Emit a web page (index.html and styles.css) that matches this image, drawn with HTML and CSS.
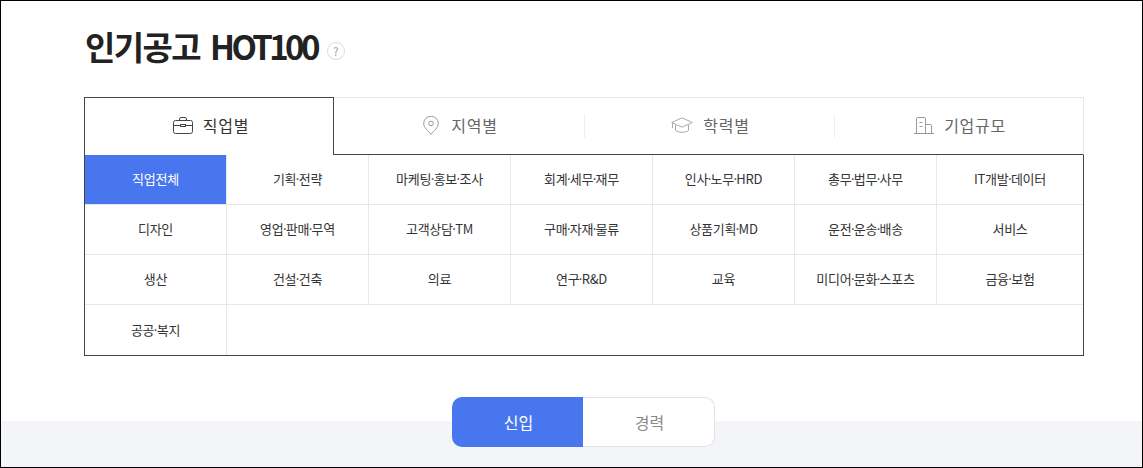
FILE: index.html
```html
<!DOCTYPE html>
<html lang="ko">
<head>
<meta charset="utf-8">
<title>인기공고 HOT100</title>
<link rel="stylesheet" href="styles.css">
</head>
<body>
<div class="frame">
  <main class="content">
    <h1 class="title">인기공고 <span class="latin">HOT100</span><span class="help">?</span></h1>
    <section class="panel">
      <div class="tabs">
        <div class="tab active">
          <svg class="ico" width="20" height="17" viewBox="0 0 20 17" fill="none" stroke="#444" stroke-width="1"><rect x="0.5" y="3.5" width="19" height="13" rx="2"/><path d="M6.5 3.5V2a1.500 1.500 0 0 1 1.500-1.500h4A1.500 1.500 0 0 1 13.500 2v1.500M0.500 8.500h6.500M13 8.500h6.500"/><rect x="7.500" y="7.500" width="5" height="2"/></svg>
          <span>직업별</span>
        </div>
        <div class="tab">
          <svg class="ico ico-pin" width="16" height="19" viewBox="0 0 16 19" fill="none" stroke="#999" stroke-width="1"><path d="M8 18.300C5 14.800 0.700 11.500 0.700 7.500a7.300 7.300 0 0 1 14.600 0C15.300 11.500 11 14.800 8 18.300z"/><circle cx="8" cy="7.500" r="2.300"/></svg>
          <span>지역별</span>
        </div>
        <div class="tab sep">
          <svg class="ico" width="22" height="17" viewBox="0 0 22 17" fill="none" stroke="#aaa" stroke-width="1"><path d="M11 0.800L21.300 5.500 11 10.200 0.700 5.500z"/><path d="M4.500 8v5.500c2 2.300 11 2.300 13 0V8M1.500 6v5"/></svg>
          <span>학력별</span>
        </div>
        <div class="tab sep">
          <svg class="ico" width="20" height="17" viewBox="0 0 20 17" fill="none" stroke="#999" stroke-width="1"><path d="M0 16.500h20M2.500 16.500V1.500a1 1 0 0 1 1-1h7a1 1 0 0 1 1 1v15M11.500 7.500h5a1 1 0 0 1 1 1v8M5.500 5.500h3M5.500 9.500h3"/></svg>
          <span>기업규모</span>
        </div>
      </div>
      <div class="grid">
        <a class="cell on"><span>직업전체</span></a>
        <a class="cell"><span>기획<i>·</i>전략</span></a>
        <a class="cell"><span>마케팅<i>·</i>홍보<i>·</i>조사</span></a>
        <a class="cell"><span>회계<i>·</i>세무<i>·</i>재무</span></a>
        <a class="cell"><span>인사<i>·</i>노무<i>·</i>HRD</span></a>
        <a class="cell"><span>총무<i>·</i>법무<i>·</i>사무</span></a>
        <a class="cell"><span>IT개발<i>·</i>데이터</span></a>
        <a class="cell"><span>디자인</span></a>
        <a class="cell"><span>영업<i>·</i>판매<i>·</i>무역</span></a>
        <a class="cell"><span>고객상담<i>·</i>TM</span></a>
        <a class="cell"><span>구매<i>·</i>자재<i>·</i>물류</span></a>
        <a class="cell"><span>상품기획<i>·</i>MD</span></a>
        <a class="cell"><span>운전<i>·</i>운송<i>·</i>배송</span></a>
        <a class="cell"><span>서비스</span></a>
        <a class="cell"><span>생산</span></a>
        <a class="cell"><span>건설<i>·</i>건축</span></a>
        <a class="cell"><span>의료</span></a>
        <a class="cell"><span>연구<i>·</i>R&amp;D</span></a>
        <a class="cell"><span>교육</span></a>
        <a class="cell"><span>미디어<i>·</i>문화<i>·</i>스포츠</span></a>
        <a class="cell"><span>금융<i>·</i>보험</span></a>
        <a class="cell last"><span>공공<i>·</i>복지</span></a>
      </div>
    </section>
    <div class="band">
      <div class="toggle">
        <a class="opt sel">신입</a>
        <a class="opt">경력</a>
      </div>
    </div>
  </main>
</div>
</body>
</html>
```
FILE: styles.css
```css
* { box-sizing: border-box; }
html, body { margin: 0; padding: 0; background: #fff; }
body { font-family: "Noto Sans CJK KR", "Noto Sans", sans-serif; color: #222; }
.frame { width: 1143px; height: 468px; border: 1px solid #000; overflow: hidden; background: #fff; }
.content { display: flex; flex-direction: column; height: 100%; }
.title { margin: 0; padding: 22px 0 27px 84px; height: 96px; font-size: 33px; line-height: 47px; font-weight: 700; letter-spacing: -1.6px; color: #222; display: flex; align-items: center; align-self: flex-start; }
.latin { margin-left: 10px; letter-spacing: -3.6px; }
.help { display: block; width: 18px; height: 18px; border: 1px solid #ddd; border-radius: 50%; font-size: 11px; line-height: 16px; text-align: center; color: #999; letter-spacing: 0; font-weight: 400; margin-left: 10px; margin-top: 8px; }
.panel { margin-left: 83px; width: 1000px; }
.tabs { display: grid; grid-template-columns: 250px 250px 250px 250px; height: 58px; }
.tab { display: flex; align-items: center; justify-content: center; gap: 10px; padding: 0 0 2px 3px; font-size: 16px; letter-spacing: 0.7px; color: #666; border-top: 1px solid #e8e8e8; border-bottom: 1px solid #444; position: relative; }
.tab:last-child { border-right: 1px solid #e8e8e8; }
.tab.active { color: #333; border: 1px solid #444; border-bottom: 0; background: #fff; padding: 0 0 3px 4px; }
.tab.sep::before { content: ""; position: absolute; left: 0; top: 16px; height: 24px; width: 1px; background: #eee; }
.ico { flex: none; }
.ico-pin { margin-right: 2px; }
.grid { display: grid; grid-template-columns: repeat(6, 142px) 1fr; grid-auto-rows: 50px; border: 1px solid #444; border-top: 0; height: 201px; }
.cell { display: flex; align-items: center; justify-content: center; padding-bottom: 2px; font-size: 13px; letter-spacing: -0.25px; color: #333; border-right: 1px solid #e8e8e8; border-bottom: 1px solid #e8e8e8; }
.cell i { font-style: normal; margin: 0 -0.5px; }
.cell:nth-child(7n) { border-right: 0; }
.cell.last { border-bottom: 0; }
.cell.on { background: #4876ef; color: #fff; }
.band { flex: 1; margin-top: 41px; padding-left: 451px; display: flex; align-items: flex-start; background: linear-gradient(#fff 24px, #f4f5f8 24px); }
.toggle { display: grid; grid-template-columns: 131px 132px; height: 50px; }
.opt { display: flex; align-items: center; justify-content: center; padding: 0 0 1px 2px; font-size: 16px; color: #888; background: #fff; border: 1px solid #e1e3e8; border-left: 0; border-radius: 0 10px 10px 0; }
.opt.sel { color: #fff; background: #4876ef; border: 0; border-radius: 10px 0 0 10px; }
```
